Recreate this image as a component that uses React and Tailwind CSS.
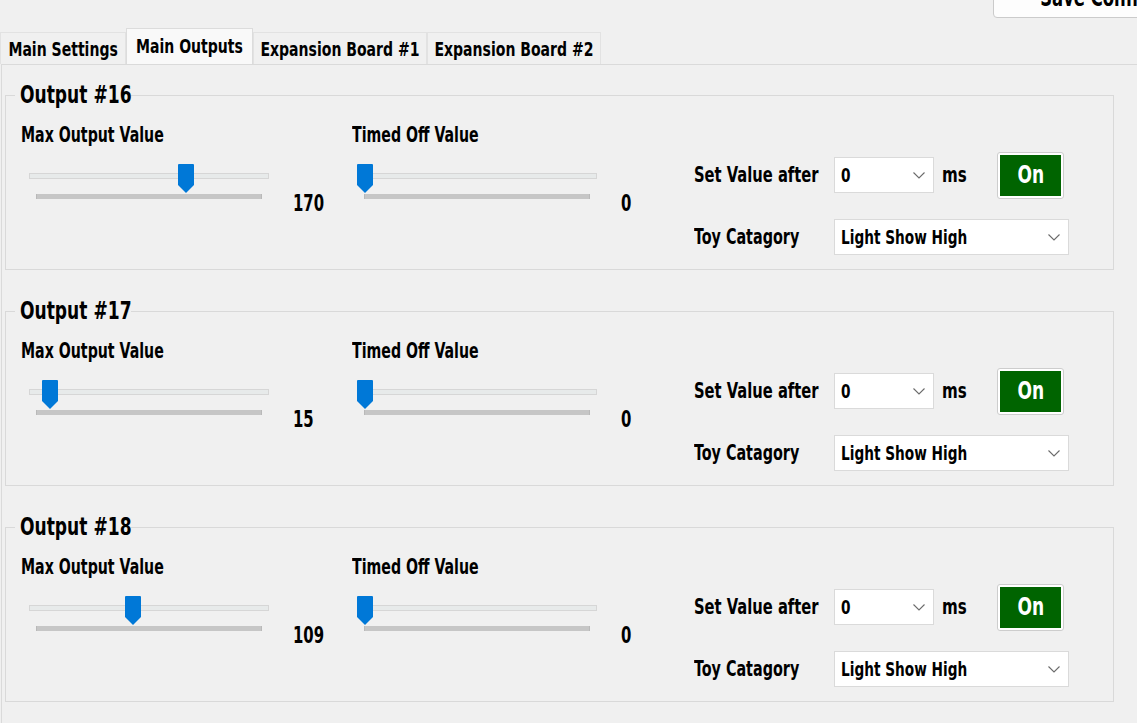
import React from "react";

const FONT = "font-['DejaVu_Sans_Condensed','DejaVu_Sans',sans-serif]";

const outputs = [
  { id: 16, max: 170, timed: 0 },
  { id: 17, max: 15, timed: 0 },
  { id: 18, max: 109, timed: 0 },
];

// narrow the condensed face a bit more so it reads like the original's tall bold type
const T = ({ children, s = "scale-x-[0.76]", o = "origin-left" }) => (
  <span className={"inline-block whitespace-nowrap " + o + " " + s}>{children}</span>
);

const Chevron = () => (
  <svg width="12" height="7" viewBox="0 0 12 7" className="shrink-0">
    <path d="M0.5 0.5 L6 6 L11.5 0.5" fill="none" stroke="#6b6b6b" strokeWidth="1.1" />
  </svg>
);

const Thumb = ({ left }) => (
  <svg
    width="16"
    height="29"
    viewBox="0 0 16 29"
    className="absolute top-0"
    style={{ left }}
  >
    <path d="M1 0 H15 Q16 0 16 1 V21 L8 29 L0 21 V1 Q0 0 1 0 Z" fill="#0078d7" />
  </svg>
);

const Slider = ({ value, offset }) => {
  const left = Math.round((value / 255) * 224);
  return (
    <div className="mt-[17px] flex items-start">
      <div className={"w-[240px] " + offset}>
        <div className="relative h-[26px] pt-[9px]">
          <div className="h-[6px] border border-[#d6d6d6] bg-[#e7eaea]" />
          <Thumb left={left} />
        </div>
        <div className="mt-[4px] ml-[7px] w-[226px] h-[5px] bg-[#c6c6c6] border-x border-[#b9b9b9]" />
      </div>
      <div className="ml-[24px] mt-[26px] text-[23px] leading-[26px]">
        <T s="scale-x-[0.72]">{value}</T>
      </div>
    </div>
  );
};

const Combo = ({ text, width }) => (
  <div
    className={
      "h-[36px] bg-white border border-[#dadada] flex items-center justify-between pl-[6px] pr-[8px] text-[20px] leading-[24px] " +
      width
    }
  >
    <T>{text}</T>
    <Chevron />
  </div>
);

const OutputGroup = ({ item }) => (
  <fieldset className="ml-[3px] w-[1109px] border border-[#d9d9d9] mb-[27px]">
    <legend className="ml-[9px] px-[5px] w-[116px] whitespace-nowrap text-[25px] leading-[28px]">
      <T>Output #{item.id}</T>
    </legend>
    <div className="flex items-start pl-[15px] pt-[14px] pb-[14px]">
      <div className="w-[331px]">
        <div className="text-[21px] leading-[24px]">
          <T s="scale-x-[0.75]">Max Output Value</T>
        </div>
        <Slider value={item.max} offset="ml-[8px]" />
      </div>
      <div className="w-[342px]">
        <div className="text-[21px] leading-[24px]">
          <T s="scale-x-[0.75]">Timed Off Value</T>
        </div>
        <Slider value={item.timed} offset="ml-[5px]" />
      </div>
      <div className="mt-[28px] flex flex-col">
        <div className="flex items-center h-[48px]">
          <div className="w-[140px] text-[21px] leading-[24px]">
            <T s="scale-x-[0.78]">Set Value after</T>
          </div>
          <Combo text="0" width="w-[100px]" />
          <div className="w-[63px] pl-[8px] text-[21px] leading-[24px]">
            <T s="scale-x-[0.8]">ms</T>
          </div>
          <button className="w-[67px] h-[47px] p-[2px] bg-white border border-[#cdcdcd] rounded-[3px]">
            <div className="w-full h-full bg-[#006400] text-white flex items-center justify-center text-[24px] leading-[26px]">
              <T s="scale-x-[0.79]" o="origin-center">On</T>
            </div>
          </button>
        </div>
        <div className="flex items-center mt-[20px]">
          <div className="w-[140px] text-[21px] leading-[24px]">
            <T>Toy Catagory</T>
          </div>
          <Combo text="Light Show High" width="w-[235px]" />
        </div>
      </div>
    </div>
  </fieldset>
);

const tabs = [
  { name: "Main Settings", w: "w-[126px]" },
  { name: "Main Outputs", w: "w-[127px]", active: true },
  { name: "Expansion Board #1", w: "w-[174px]" },
  { name: "Expansion Board #2", w: "w-[174px]" },
];

export default function App() {
  return (
    <div className={"w-[1137px] h-[723px] overflow-hidden bg-[#f0f0f0] text-black font-bold " + FONT}>
      <div className="h-[28px] flex justify-end">
        <button className="shrink-0 -mt-[22px] -mr-[60px] w-[204px] h-[40px] bg-[#fdfdfd] border border-[#cbcbcb] rounded-[4px] text-[24px] leading-[26px]">
          <T o="origin-center">Save Config</T>
        </button>
      </div>

      <div className="h-[36px] flex items-end">
        {tabs.map((t) =>
          t.active ? (
            <div
              key={t.name}
              className={"h-[36px] bg-[#f9f9f9] border border-b-0 border-[#dcdcdc] flex items-center justify-center pb-[2px] text-[20px] leading-[24px] " + t.w}
            >
              <T s="scale-x-[0.78]" o="origin-center">{t.name}</T>
            </div>
          ) : (
            <div
              key={t.name}
              className={"h-[32px] bg-[#f0f0f0] border border-b-0 border-[#e2e2e2] flex items-center justify-center text-[20px] leading-[24px] " + t.w}
            >
              <T s="scale-x-[0.78]" o="origin-center">{t.name}</T>
            </div>
          )
        )}
      </div>

      <div className="ml-[1px] h-[700px] border-l border-t border-[#dadada] pt-[16px]">
        {outputs.map((o) => (
          <OutputGroup key={o.id} item={o} />
        ))}
      </div>
    </div>
  );
}
